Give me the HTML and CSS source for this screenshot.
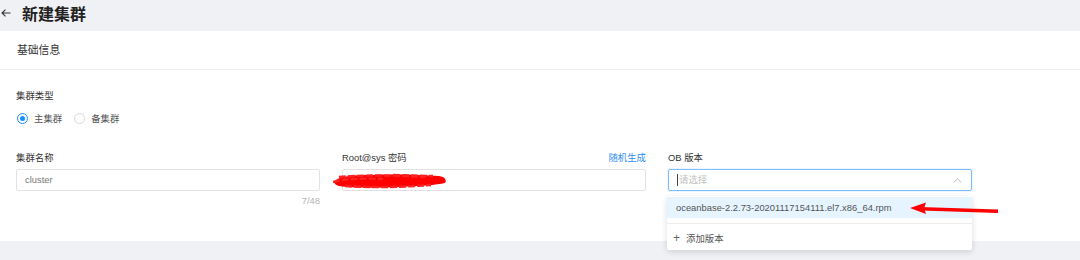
FILE: index.html
```html
<!DOCTYPE html>
<html lang="zh-CN">
<head>
  <meta charset="UTF-8">
  <title>新建集群</title>
  <link rel="stylesheet" href="styles.css">
</head>
<body>

<div class="page-header">
  <svg class="back-icon" width="10" height="8" viewBox="0 0 10 8">
    <path d="M9.5 4H1M4.5 0.6L1 4l3.5 3.4" fill="none" stroke="#333" stroke-width="1.1"/>
  </svg>
  <h1>新建集群</h1>
</div>

<div class="card">
  <div class="card-head">基础信息</div>
  <div class="card-body">
    <div class="label">集群类型</div>
    <div class="radio-group">
      <label class="radio checked"><span class="radio-dot"></span>主集群</label>
      <label class="radio"><span class="radio-dot"></span>备集群</label>
    </div>

    <div class="form-row">
      <div class="field">
        <div class="label">集群名称</div>
        <div class="input">cluster</div>
        <div class="count">7/48</div>
      </div>

      <div class="field">
        <div class="label label-split">Root@sys 密码 <a class="link">随机生成</a></div>
        <div class="input"></div>
        <!-- hand-drawn redaction over the password -->
        <svg class="scribble" width="116" height="18" viewBox="0 0 116 18">
          <path d="M2 9 C6 4 20 3 40 3 C62 2 88 3 106 4 C112 5 114 8 112 11 C104 13 86 14 66 15 C44 16 20 16 6 14 C2 13 1 11 2 9Z" fill="#f00"/>
          <path d="M0 10 C10 7 30 6 50 7 M6 5 C30 3 60 3 92 5 M12 14 C40 16 70 15 98 13 M60 3 L100 4" stroke="#f22" stroke-width="2.4" stroke-dasharray="7 2" fill="none"/>
        </svg>
      </div>

      <div class="field">
        <div class="label">OB 版本</div>
        <div class="select">
          <span class="caret"></span>
          <span class="placeholder">请选择</span>
          <svg class="chevron" width="9" height="5" viewBox="0 0 9 5">
            <path d="M0.6 4.6L4.5 0.8l3.9 3.8" fill="none" stroke="#bbb" stroke-width="1"/>
          </svg>
        </div>
        <div class="dropdown">
          <div class="option active">oceanbase-2.2.73-20201117154111.el7.x86_64.rpm</div>
          <div class="dropdown-foot"><span class="plus">+</span>添加版本</div>
          <svg class="red-arrow" width="100" height="14" viewBox="0 0 100 14">
            <path d="M10 6 L88 8.5 L88 12 L10 9.5Z" fill="#f00"/>
            <path d="M0 7 L16 1.5 L14 7.5 L16 13Z" fill="#f00"/>
          </svg>
        </div>
      </div>
    </div>
  </div>
</div>
<div class="page-foot"></div>

</body>
</html>
```

FILE: styles.css
```css
body {
  margin: 0;
  background: #f0f1f5;
  font-family: "Liberation Sans", "Noto Sans CJK SC", sans-serif;
  font-size: 9.4px;
  color: #333;
}
.page-header {
  height: 31px;
  display: flex;
  align-items: center;
  padding-left: 1px;
}
.back-icon { margin-top: -6px; }
.page-header h1 {
  margin: -2px 0 0 11px;
  font-size: 16px;
  font-weight: bold;
  color: #222;
  line-height: 20px;
}
.card {
  background: #fff;
  height: 210px;
  position: relative;
  z-index: 1;
}
.page-foot { height: 19px; }
.card-head {
  height: 38px;
  line-height: 38px;
  padding-left: 17px;
  font-size: 10.8px;
  color: #333;
  border-bottom: 1px solid #ececec;
}
.card-body {
  padding: 19px 16px 0;
}
.label {
  line-height: 14px;
  color: #333;
}
.radio-group {
  display: flex;
  gap: 11px;
  margin-top: 7px;
  height: 16px;
  align-items: center;
}
.radio {
  display: flex;
  align-items: center;
  color: #555;
}
.radio-dot {
  width: 9px;
  height: 9px;
  border: 1px solid #d9d9d9;
  border-radius: 50%;
  margin: 0 6px 0 1px;
  position: relative;
}
.radio.checked .radio-dot { border-color: #1890ff; }
.radio.checked .radio-dot::after {
  content: "";
  position: absolute;
  left: 2px;
  top: 2px;
  width: 5px;
  height: 5px;
  border-radius: 50%;
  background: #1890ff;
}
.form-row {
  display: grid;
  grid-template-columns: 304px 304px 304px;
  gap: 22px;
  margin-top: 25px;
}
.field { position: relative; }
.label-split {
  display: flex;
  justify-content: space-between;
}
.link { color: #2f8ef5; }
.input, .select {
  margin-top: 4px;
  height: 20px;
  border: 1px solid #e2e2e2;
  border-radius: 2px;
  line-height: 20px;
  padding-left: 8px;
  color: #777;
}
.count {
  text-align: right;
  color: #b5b5b5;
  line-height: 14px;
  margin-top: 3px;
}
.scribble {
  position: absolute;
  left: -9px;
  top: 21px;
}
.select {
  border-color: #7dbcff;
  box-shadow: 0 0 0 1px rgba(24, 144, 255, 0.08);
  display: flex;
  align-items: center;
  position: relative;
}
.caret {
  width: 1px;
  height: 12px;
  background: #444;
  margin-right: 1px;
}
.placeholder { color: #c0c0c0; }
.chevron {
  position: absolute;
  right: 9px;
  top: 8px;
}
.dropdown {
  position: absolute;
  z-index: 2;
  left: -1px;
  top: 45px;
  width: 305px;
  background: #fff;
  border-radius: 2px;
  box-shadow: 0 2px 6px rgba(0, 0, 0, 0.14);
  padding-top: 1px;
}
.option {
  height: 21px;
  line-height: 21px;
  padding-left: 9px;
  color: #555;
}
.option.active { background: #e6f4ff; }
.dropdown-foot {
  border-top: 1px solid #ececec;
  margin-top: 5px;
  height: 26px;
  line-height: 28px;
  padding-left: 6px;
  color: #555;
}
.plus {
  font-size: 12px;
  margin-right: 6px;
  color: #666;
}
.red-arrow {
  position: absolute;
  left: 243px;
  top: 5px;
}
```
